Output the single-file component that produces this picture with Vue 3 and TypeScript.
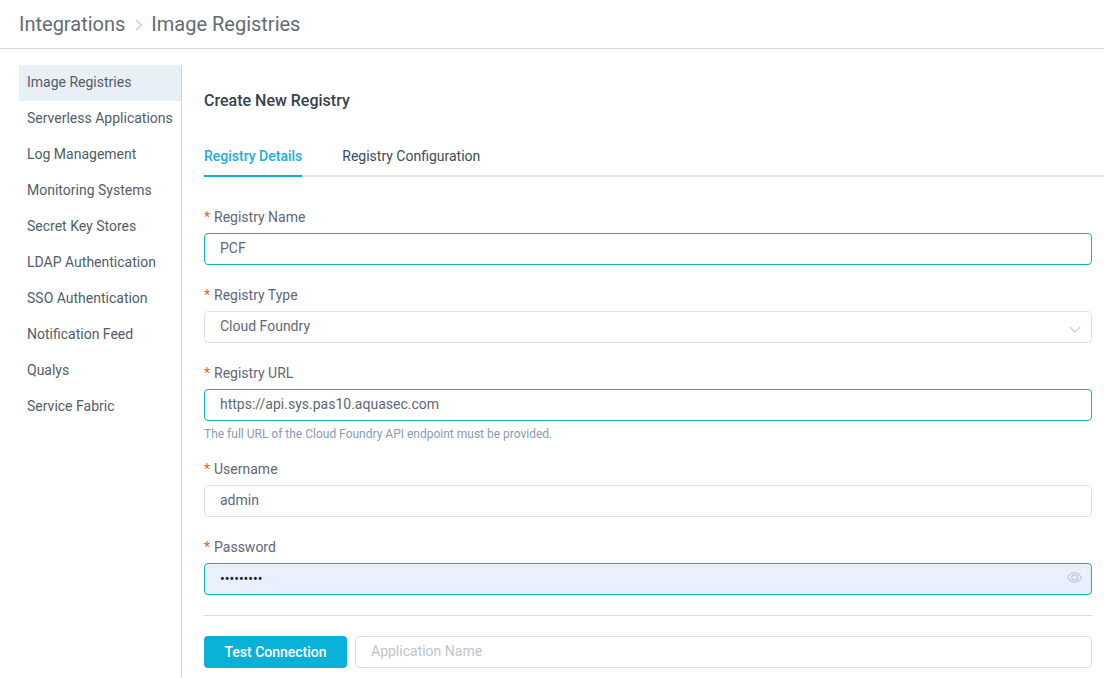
<script setup lang="ts">
const menu = [
  "Image Registries",
  "Serverless Applications",
  "Log Management",
  "Monitoring Systems",
  "Secret Key Stores",
  "LDAP Authentication",
  "SSO Authentication",
  "Notification Feed",
  "Qualys",
  "Service Fabric",
];
</script>

<template>
  <div class="page">
    <header class="topbar">
      <span>Integrations</span>
      <svg class="crumb-sep" width="8" height="12" viewBox="0 0 8 12"><path d="M1 1l5.500 5L1 11" fill="none" stroke="#c4c9d0" stroke-width="1.100" /></svg>
      <span>Image Registries</span>
    </header>

    <div class="body">
      <nav class="side">
        <a v-for="(item, i) in menu" :key="item" class="side-item" :class="{ active: i === 0 }">{{ item }}</a>
      </nav>

      <main class="content">
        <h1 class="title">Create New Registry</h1>

        <div class="tabs">
          <div class="tab current">Registry Details</div>
          <div class="tab">Registry Configuration</div>
        </div>

        <form class="form">
          <div class="field">
            <label class="label"><i>*</i>Registry Name</label>
            <input class="input ok" type="text" value="PCF" />
          </div>

          <div class="field">
            <label class="label"><i>*</i>Registry Type</label>
            <div class="input select">
              <span>Cloud Foundry</span>
              <svg width="12" height="7" viewBox="0 0 12 7"><path d="M.7.8L6 6l5.300-5.200" fill="none" stroke="#c3c8d2" stroke-width="1.100" /></svg>
            </div>
          </div>

          <div class="field has-help">
            <label class="label"><i>*</i>Registry URL</label>
            <input class="input ok" type="text" value="https://api.sys.pas10.aquasec.com" />
            <p class="help">The full URL of the Cloud Foundry API endpoint must be provided.</p>
          </div>

          <div class="field">
            <label class="label"><i>*</i>Username</label>
            <input class="input" type="text" value="admin" />
          </div>

          <div class="field">
            <label class="label"><i>*</i>Password</label>
            <div class="pass-wrap">
              <input class="input ok filled" type="password" value="password1" />
              <svg class="eye" width="15" height="11" viewBox="0 0 15 11" fill="none" stroke="#bfc3ca" stroke-width="1.100">
                <path d="M.8 5.500C2.500 2.400 4.800.8 7.500.8s5 1.600 6.700 4.700c-1.700 3.100-4 4.700-6.700 4.700S2.500 8.600.8 5.500z" />
                <circle cx="7.500" cy="5.500" r="2.800" />
              </svg>
            </div>
          </div>

          <hr class="divider" />

          <div class="actions">
            <button class="btn" type="button">Test Connection</button>
            <input class="input app" type="text" placeholder="Application Name" />
          </div>
        </form>
      </main>
    </div>
  </div>
</template>

<style>
html,
body {
  margin: 0;
  background: #fff;
  overflow: hidden;
}
</style>

<style scoped>
.page {
  width: 1104px;
  height: 678px;
  overflow: hidden;
  font-family: Roboto, "Liberation Sans", sans-serif;
  font-size: 14px;
  color: #5f6875;
  box-sizing: border-box;
}

.topbar {
  height: 48px;
  border-bottom: 1px solid #cbd6e4;
  display: flex;
  align-items: center;
  gap: 9px;
  padding-left: 19px;
  font-size: 20px;
  color: #646b75;
}

.crumb-sep {
  margin: 1px -1px 0 1px;
}

.body {
  display: flex;
  padding: 16px 0 0 19px;
  height: 629px;
  box-sizing: border-box;
}

.side {
  width: 163px;
  box-sizing: border-box;
  flex-shrink: 0;
  border-right: 1px solid #cbd6e4;
}

.side-item {
  display: block;
  height: 36px;
  line-height: 34px;
  padding-left: 8px;
  color: #535d69;
  white-space: nowrap;
}

.side-item.active {
  background: #e8eff7;
}

.content {
  flex: 1;
  padding: 26px 0 0 22px;
}

.title {
  margin: 0;
  font-size: 16px;
  font-weight: 500;
  line-height: 19px;
  color: #37414e;
}

.tabs {
  display: flex;
  gap: 40px;
  margin-top: 26px;
  border-bottom: 2px solid #e4e7ee;
}

.tab {
  box-sizing: border-box;
  height: 41px;
  line-height: 40px;
  margin-bottom: -2px;
  color: #424b58;
}

.tab.current {
  color: #1eadd8;
  font-weight: 500;
  border-bottom: 2px solid #09b1d6;
}

.form {
  padding-right: 12px;
  margin-top: 30px;
}

.field {
  margin-bottom: 20px;
}

.field.has-help {
  margin-bottom: 18px;
}

.label {
  display: block;
  height: 16px;
  line-height: 20px;
  margin-bottom: 10px;
  color: #5f6875;
}

.label i {
  font-style: normal;
  color: #ff5a1f;
  margin-right: 4px;
}

.input {
  display: block;
  width: 100%;
  height: 32px;
  box-sizing: border-box;
  border: 1px solid #dfe1ea;
  border-radius: 4px;
  padding: 0 15px 2px;
  background: #fff;
  font-family: inherit;
  font-size: 14px;
  color: #5f6875;
  outline: none;
}

.input.ok {
  border-color: #0cb9a4;
}

.input.filled {
  background: #e8f0fd;
  color: #1c2026;
  padding-bottom: 0;
}

.select {
  display: flex;
  align-items: center;
  justify-content: space-between;
  padding-right: 10px;
}

.select svg {
  margin-top: 7px;
}

.help {
  margin: 6px 0 0;
  font-size: 12px;
  line-height: 14px;
  color: #8a9bb0;
}

.pass-wrap {
  position: relative;
}

.eye {
  position: absolute;
  right: 10px;
  top: 9px;
}

.divider {
  border: 0;
  border-top: 1px solid #d3d8e0;
  margin: 0 0 20px;
}

.actions {
  display: flex;
  gap: 8px;
}

.btn {
  width: 143px;
  height: 32px;
  flex-shrink: 0;
  border: 0;
  border-radius: 4px;
  padding-bottom: 2px;
  background: #09b1d6;
  color: #fff;
  font-family: inherit;
  font-size: 14px;
  font-weight: 500;
}

.app {
  flex: 1;
  width: auto;
}

.app::placeholder {
  color: #c0c4cc;
}
</style>
